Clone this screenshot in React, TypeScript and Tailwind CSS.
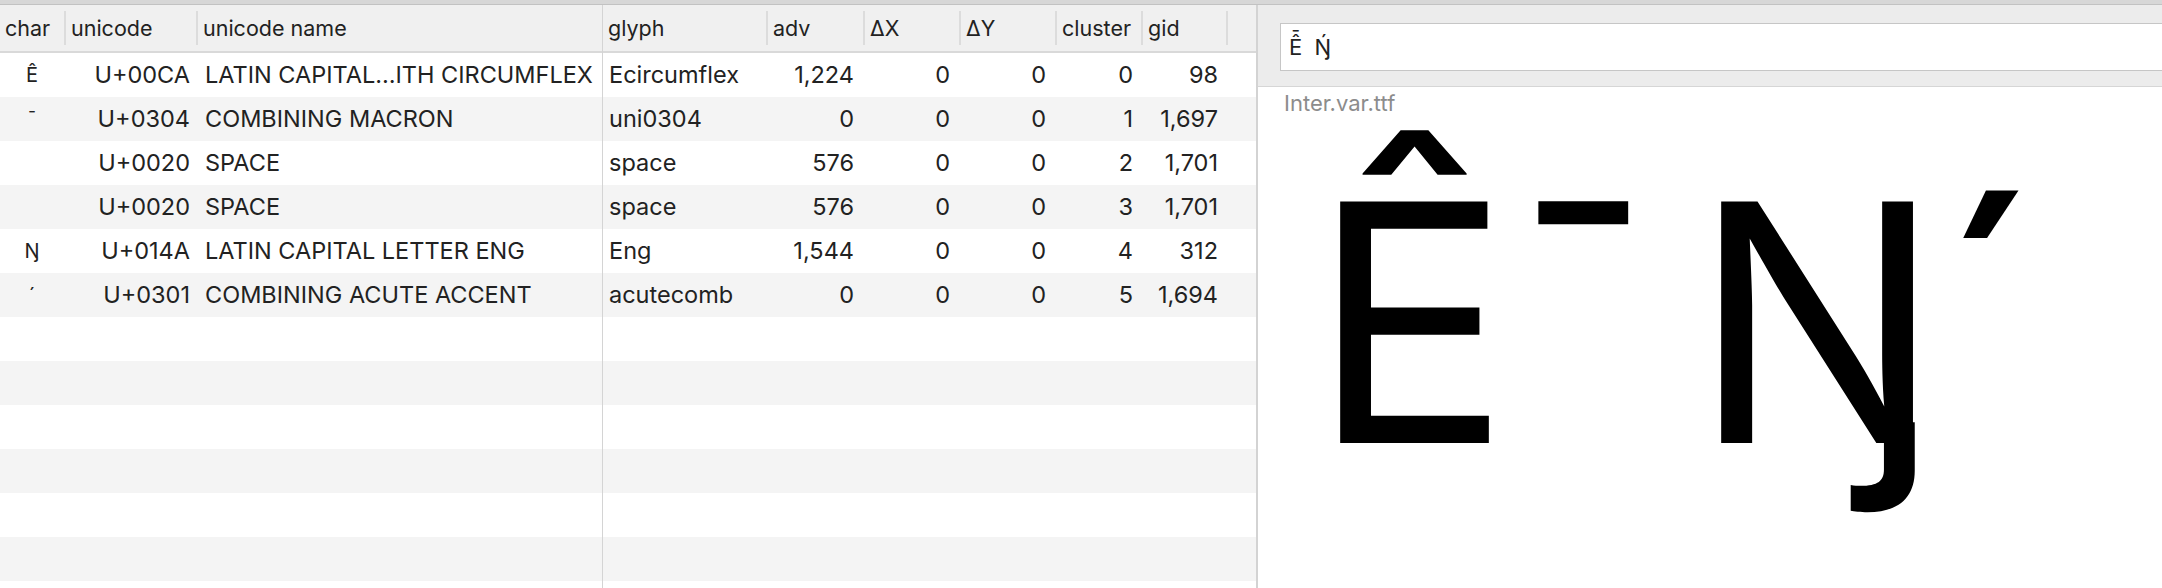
import React from "react";

type Row = {
    ch: string;
    code: string;
    name: string;
    glyph: string;
    adv: string;
    dx: string;
    dy: string;
    cluster: string;
    gid: string;
};

const rows: Row[] = [
    { ch: "Ê", code: "U+00CA", name: "LATIN CAPITAL\u2026ITH CIRCUMFLEX", glyph: "Ecircumflex", adv: "1,224", dx: "0", dy: "0", cluster: "0", gid: "98" },
    { ch: "¯", code: "U+0304", name: "COMBINING MACRON", glyph: "uni0304", adv: "0", dx: "0", dy: "0", cluster: "1", gid: "1,697" },
    { ch: "", code: "U+0020", name: "SPACE", glyph: "space", adv: "576", dx: "0", dy: "0", cluster: "2", gid: "1,701" },
    { ch: "", code: "U+0020", name: "SPACE", glyph: "space", adv: "576", dx: "0", dy: "0", cluster: "3", gid: "1,701" },
    { ch: "Ŋ", code: "U+014A", name: "LATIN CAPITAL LETTER ENG", glyph: "Eng", adv: "1,544", dx: "0", dy: "0", cluster: "4", gid: "312" },
    { ch: "´", code: "U+0301", name: "COMBINING ACUTE ACCENT", glyph: "acutecomb", adv: "0", dx: "0", dy: "0", cluster: "5", gid: "1,694" },
];

const TOTAL_ROWS = 13;

function HeaderCell({ label, width }: { label: string; width: string }) {
    return (
        <div className={`${width} flex items-center justify-between shrink-0`}>
            <span className="pl-[5px]">{label}</span>
            <span className="w-[2px] h-[34px] bg-[#dcdcdc]" />
        </div>
    );
}

function stripe(i: number) {
    return i % 2 === 0 ? "bg-white" : "bg-[#f4f4f4]";
}

export default function App() {
    const padded: (Row | null)[] = [...rows, ...Array(TOTAL_ROWS - rows.length).fill(null)];

    return (
        <div className="w-[2162px] h-[588px] overflow-hidden bg-white flex flex-col text-[#222]" style={{ fontFamily: "Inter, 'Noto Sans', sans-serif" }}>
            <div className="h-[5px] bg-[#d7d7d7] border-b border-[#c2c2c2] shrink-0" />
            <div className="flex flex-1 min-h-0">
                {/* left table: char / unicode / name */}
                <div className="w-[602px] flex flex-col shrink-0">
                    <div className="h-[48px] bg-[#f0f0f0] border-b-2 border-[#d9d9d9] flex text-[21.5px] shrink-0">
                        <HeaderCell label="char" width="w-[66px]" />
                        <HeaderCell label="unicode" width="w-[132px]" />
                        <div className="flex-1 flex items-center pl-[5px]">unicode name</div>
                    </div>
                    {padded.map((r, i) => (
                        <div key={i} className={`h-[44px] flex items-center text-[23.5px] shrink-0 ${stripe(i)}`}>
                            {r && (
                                <>
                                    <div className="w-[64px] text-center text-[20px]">{r.ch}</div>
                                    <div className="w-[126px] text-right">{r.code}</div>
                                    <div className="flex-1 pl-[15px] whitespace-nowrap">{r.name}</div>
                                </>
                            )}
                        </div>
                    ))}
                </div>
                <div className="w-[1px] bg-[#d4d4d4] shrink-0" />
                {/* right table: glyph metrics */}
                <div className="w-[653px] flex flex-col shrink-0">
                    <div className="h-[48px] bg-[#f0f0f0] border-b-2 border-[#d9d9d9] flex text-[21.5px] shrink-0">
                        <HeaderCell label="glyph" width="w-[165px]" />
                        <HeaderCell label="adv" width="w-[97px]" />
                        <HeaderCell label="ΔX" width="w-[96px]" />
                        <HeaderCell label="ΔY" width="w-[96px]" />
                        <HeaderCell label="cluster" width="w-[86px]" />
                        <HeaderCell label="gid" width="w-[85px]" />
                        <div className="flex-1" />
                    </div>
                    {padded.map((r, i) => (
                        <div key={i} className={`h-[44px] flex items-center text-[23.5px] shrink-0 ${stripe(i)}`}>
                            {r && (
                                <>
                                    <div className="w-[165px] pl-[6px]">{r.glyph}</div>
                                    <div className="w-[97px] text-right pr-[11px]">{r.adv}</div>
                                    <div className="w-[96px] text-right pr-[11px]">{r.dx}</div>
                                    <div className="w-[96px] text-right pr-[11px]">{r.dy}</div>
                                    <div className="w-[86px] text-right pr-[10px]">{r.cluster}</div>
                                    <div className="w-[85px] text-right pr-[10px]">{r.gid}</div>
                                </>
                            )}
                        </div>
                    ))}
                </div>
                <div className="w-[2px] bg-[#d3d3d3] shrink-0" />
                {/* preview panel */}
                <div className="flex-1 flex flex-col overflow-hidden min-w-0">
                    <div className="h-[82px] bg-[#ececec] border-b border-[#d6d6d6] pt-[18px] pl-[22px] shrink-0">
                        <div className="w-[900px] h-[48px] bg-white border border-[#c6c6c6] flex items-center pl-[8px] text-[22px] whitespace-pre">
                            {"Ê\u0304  Ŋ\u0301"}
                        </div>
                    </div>
                    <div className="relative flex-1">
                        <div className="pl-[26px] pt-[4px] text-[22px] leading-[24px] text-[#8c8c8c]">Inter.var.ttf</div>
                        <div className="absolute left-0 top-[69px] w-full h-[332px] text-[332px] leading-none text-black">
                            <span className="absolute left-[53px] top-0">Ê</span>
                            <span className="absolute left-[246px] top-0">¯</span>
                            <span className="absolute left-[434px] top-0">Ŋ</span>
                            <span className="absolute left-[678px] top-0">´</span>
                        </div>
                    </div>
                </div>
            </div>
        </div>
    );
}
